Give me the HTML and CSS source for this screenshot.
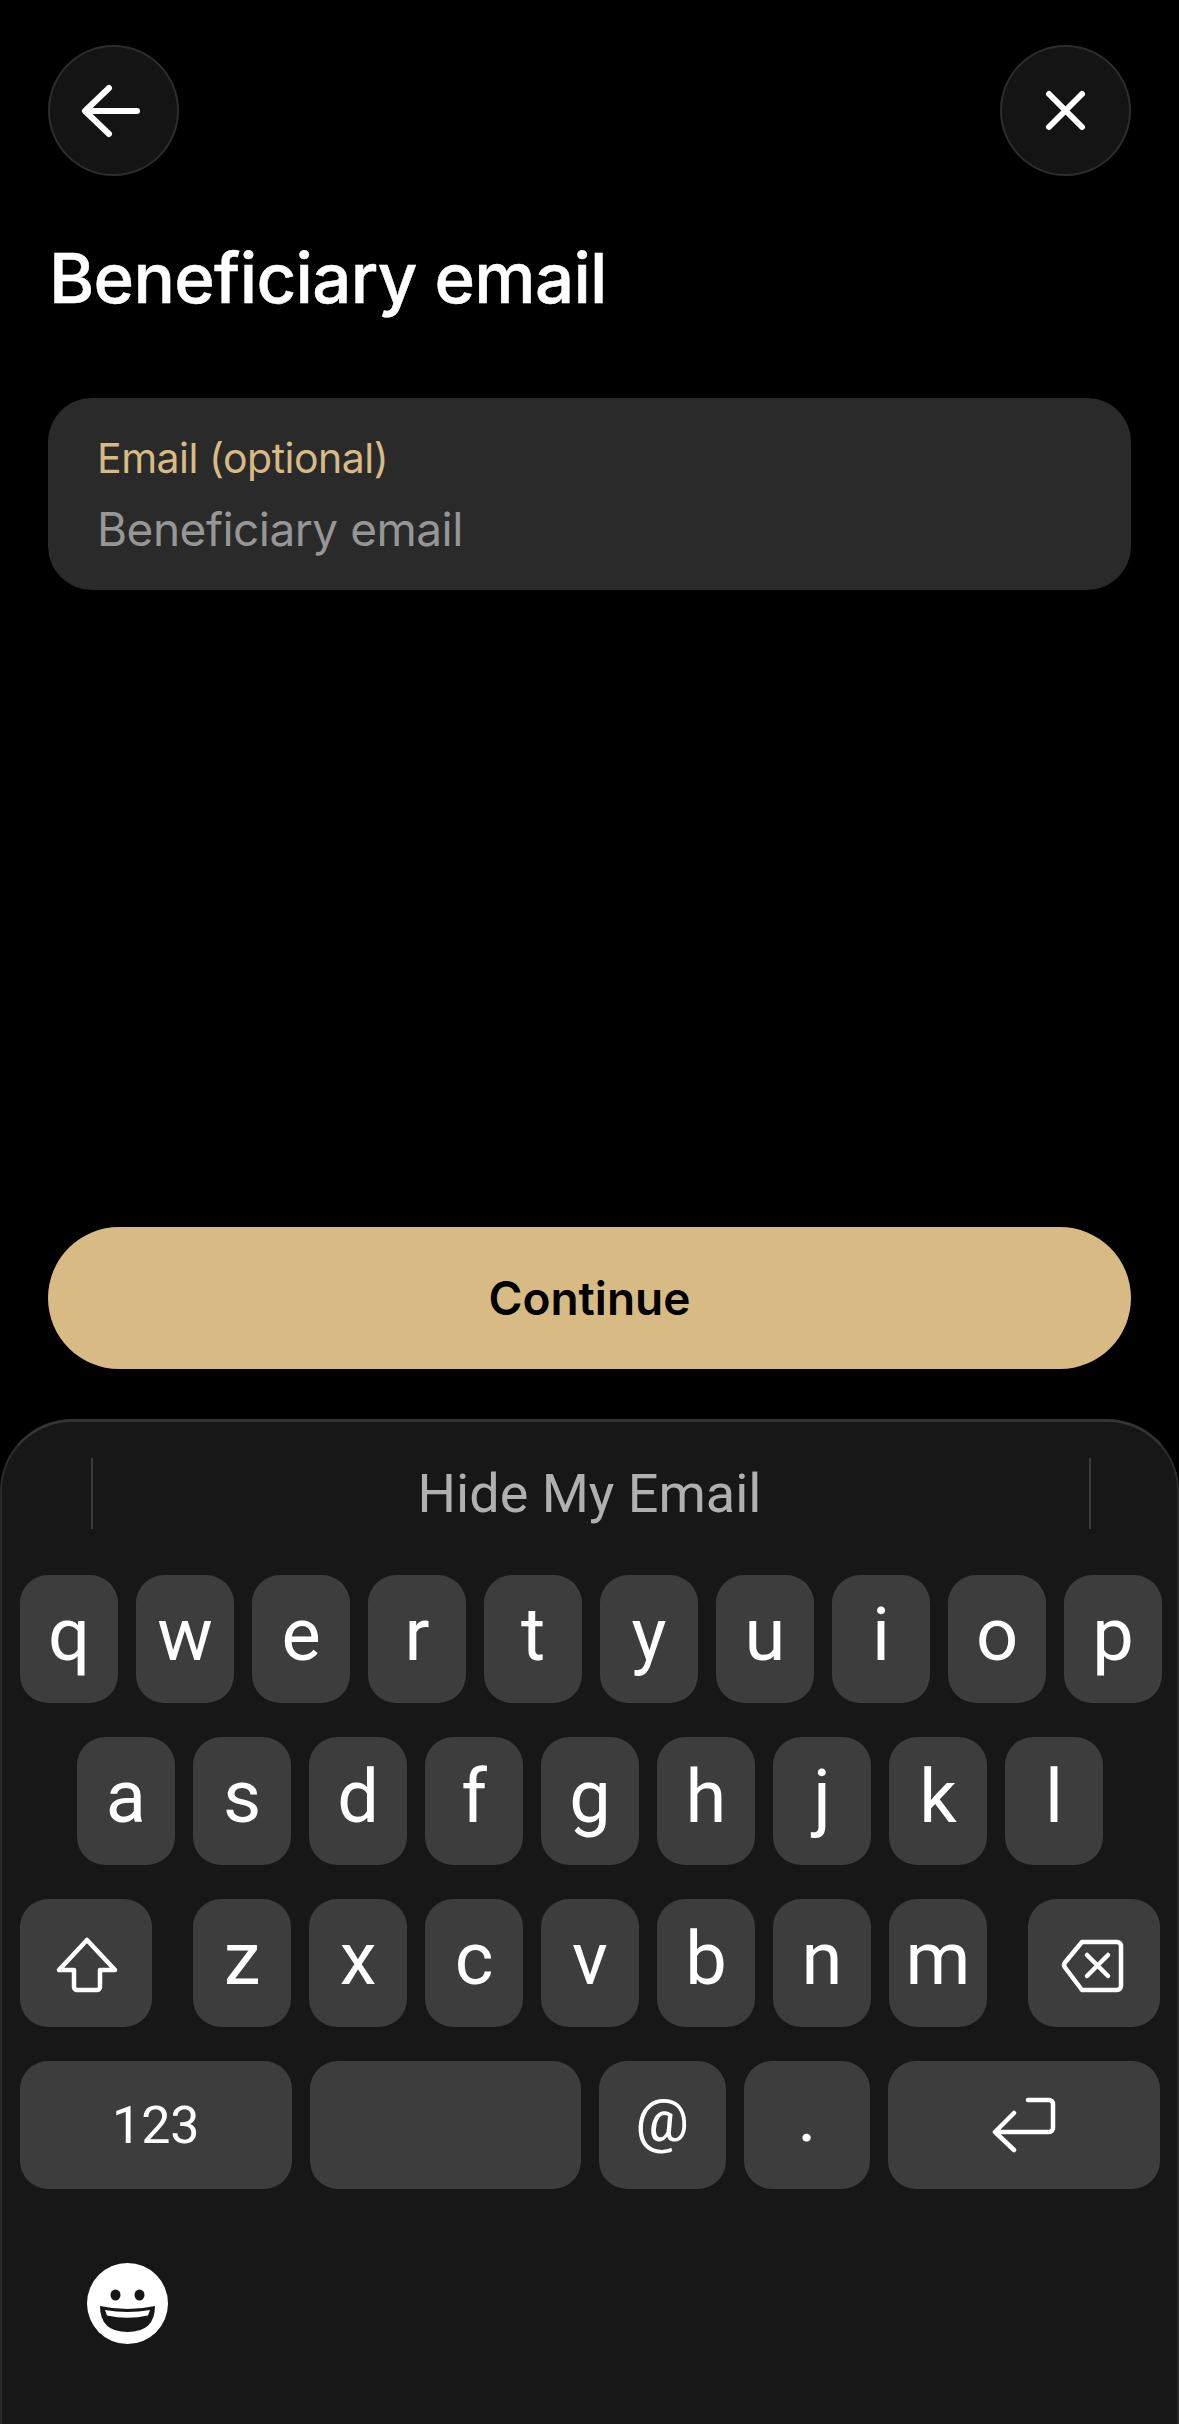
FILE: index.html
```html
<!DOCTYPE html>
<html lang="en">
<head>
	<meta charset="UTF-8">
	<title>Beneficiary email</title>
	<link rel="stylesheet" href="styles.css">
</head>
<body>
	<div class="screen">
		<div class="top">
			<div class="round">
				<svg width="131" height="131" viewBox="0 0 131 131"><path d="M89 66H39M61 43 37 66l24 23" class="line6"/></svg>
			</div>
			<div class="round">
				<svg width="131" height="131" viewBox="0 0 131 131"><path d="M49 49l33 33M82 49 49 82" class="line6"/></svg>
			</div>
		</div>
		<h1 class="title">Beneficiary email</h1>
		<div class="field">
			<div class="label">Email (optional)</div>
			<div class="placeholder">Beneficiary email</div>
		</div>
		<div class="btn">Continue</div>
		<div class="keyboard">
			<div class="suggest">
				<span class="bar"></span>
				<span class="word">Hide My Email</span>
				<span class="bar"></span>
			</div>
			<div class="row">
				<div class="key">q</div><div class="key">w</div><div class="key">e</div><div class="key">r</div><div class="key">t</div><div class="key">y</div><div class="key">u</div><div class="key">i</div><div class="key">o</div><div class="key">p</div>
			</div>
			<div class="row row2">
				<div class="key">a</div><div class="key">s</div><div class="key">d</div><div class="key">f</div><div class="key">g</div><div class="key">h</div><div class="key">j</div><div class="key">k</div><div class="key">l</div>
			</div>
			<div class="row">
				<div class="key wide">
					<svg width="132" height="128" viewBox="0 0 132 128"><path d="M67 41 39 71h15v17a3 3 0 0 0 3 3h20a3 3 0 0 0 3-3V71h15z" class="line4"/></svg>
				</div>
				<div class="key gap">z</div><div class="key">x</div><div class="key">c</div><div class="key">v</div><div class="key">b</div><div class="key">n</div><div class="key">m</div>
				<div class="key wide gap">
					<svg width="132" height="128" viewBox="0 0 132 128"><path d="M54 43h35a4 4 0 0 1 4 4v40a4 4 0 0 1-4 4H54L37 68.500a4 4 0 0 1 0-5zM59 56l21 21M80 56 59 77" class="line4"/></svg>
				</div>
			</div>
			<div class="row">
				<div class="key half small">123</div>
				<div class="key half"></div>
				<div class="key mid at">@</div>
				<div class="key mid dot">.</div>
				<div class="key half">
					<svg width="272" height="128" viewBox="0 0 272 128"><path d="M107 71h54a4 4 0 0 0 4-4V43a4 4 0 0 0-4-4h-21M126 52l-19 19 19 18" class="line4"/></svg>
				</div>
			</div>
			<div class="emoji">
				<svg width="81" height="81" viewBox="0 0 81 81">
					<circle cx="40.500" cy="40.500" r="40.500" fill="#fff"/>
					<ellipse cx="28.500" cy="32" rx="5" ry="5.500" fill="#171717"/>
					<ellipse cx="52.500" cy="32" rx="5" ry="5.500" fill="#171717"/>
					<path d="M13 43q27.500 6 55 0q0 26-27.500 26T13 43z" fill="#171717"/>
					<path d="M18 47q22.500 4 45 0l-2 5.500q-20.500 4.500-41 0z" fill="#fff"/>
				</svg>
			</div>
		</div>
	</div>
</body>
</html>
```

FILE: styles.css
```css
html, body {
	margin: 0;
	padding: 0;
	background: #000;
}
.screen {
	width: 1179px;
	height: 2424px;
	overflow: hidden;
	font-family: Inter, "Liberation Sans", sans-serif;
	color: #fff;
	display: flex;
	flex-direction: column;
}
svg {
	display: block;
}
.line6 {
	fill: none;
	stroke: #fff;
	stroke-width: 6;
	stroke-linecap: round;
	stroke-linejoin: round;
}
.line4 {
	fill: none;
	stroke: #fff;
	stroke-width: 4.500;
	stroke-linecap: round;
	stroke-linejoin: round;
}
.top {
	display: flex;
	justify-content: space-between;
	padding: 45px 48px 0;
}
.round {
	width: 131px;
	height: 131px;
	box-sizing: border-box;
	border-radius: 50%;
	background: #141414;
	box-shadow: inset 0 0 0 2px #2c2c2c;
}
.title {
	margin: 62px 0 0 49px;
	font-size: 69px;
	line-height: 80px;
	font-weight: 500;
	letter-spacing: -0.700px;
	-webkit-text-stroke: 0.500px #fff;
}
.field {
	margin: 80px 48px 0;
	height: 192px;
	box-sizing: border-box;
	padding: 36px 49px 0;
	border-radius: 44px;
	background: #2a2a2a;
}
.label {
	color: #d8bb84;
	font-size: 41px;
	line-height: 48px;
	letter-spacing: -0.500px;
}
.placeholder {
	margin-top: 20px;
	color: #969696;
	font-size: 46px;
	line-height: 54px;
	letter-spacing: -0.500px;
}
.btn {
	margin: 637px 48px 0;
	height: 142px;
	border-radius: 71px;
	background: #d8bb84;
	color: #000;
	font-size: 46px;
	font-weight: 600;
	display: flex;
	align-items: center;
	justify-content: center;
}
.keyboard {
	margin-top: 50px;
	flex: 1;
	background: #171717;
	border-top: 3px solid #343434;
	border-left: 2px solid #2a2a2a;
	border-right: 2px solid #2a2a2a;
	border-radius: 72px 72px 0 0;
	box-sizing: border-box;
	font-family: Roboto, Inter, sans-serif;
	padding: 0 18px;
	display: flex;
	flex-direction: column;
	gap: 34px;
}
.suggest {
	height: 122px;
	margin-bottom: -3px;
	padding: 36px 68px 0 71px;
	box-sizing: border-box;
	display: flex;
	justify-content: space-between;
	align-items: flex-start;
}
.bar {
	width: 2px;
	height: 71px;
	background: #3a3a3a;
}
.word {
	margin-right: 3px;
	font-size: 54px;
	line-height: 71px;
	color: #b0b0b0;
}
.row {
	display: flex;
	gap: 18px;
	height: 128px;
}
.row2 {
	padding: 0 57px;
}
.key {
	flex: 0 0 98px;
	height: 128px;
	border-radius: 28px;
	background: #3d3d3d;
	font-size: 74px;
	padding-bottom: 10px;
	box-sizing: border-box;
	display: flex;
	align-items: center;
	justify-content: center;
}
.wide {
	flex-basis: 132px;
	padding-bottom: 0;
}
.gap {
	margin-left: 23px;
}
.half {
	flex-basis: 271.500px;
	padding-bottom: 0;
}
.mid {
	flex-basis: 126.500px;
}
.small {
	font-size: 52px;
}
.at {
	font-size: 60px;
}
.dot {
	font-size: 60px;
	font-weight: 500;
}
.emoji {
	margin: 40px 0 0 67px;
}
```
